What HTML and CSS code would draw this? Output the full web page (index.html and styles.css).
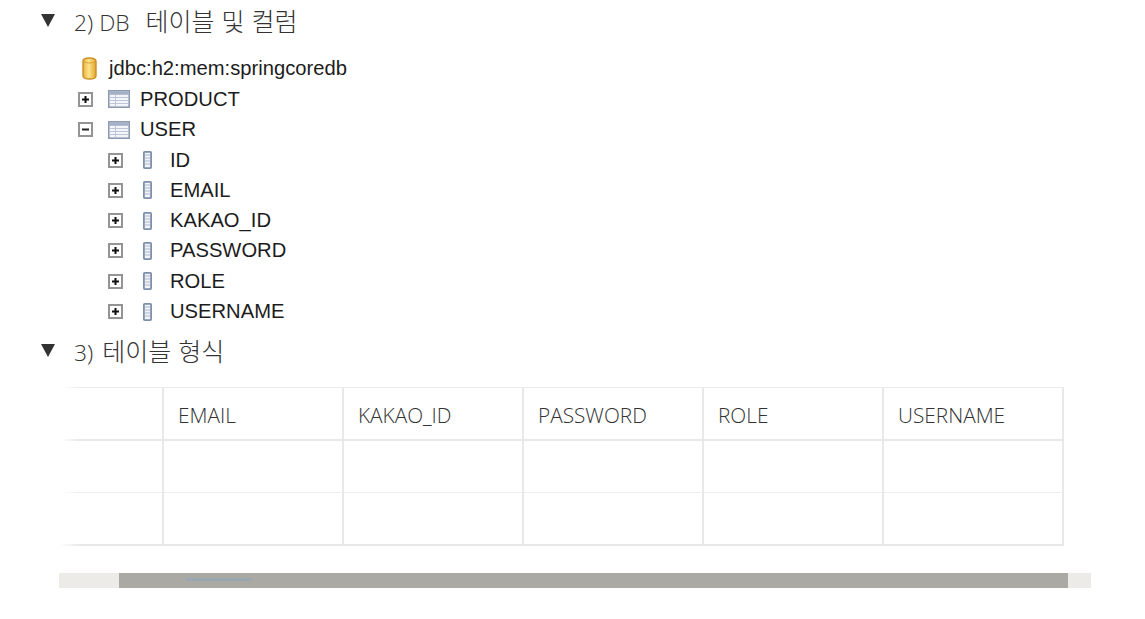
FILE: index.html
```html
<!DOCTYPE html>
<html lang="ko">
<head>
    <meta charset="UTF-8">
    <meta name="viewport" content="width=device-width, initial-scale=1.0">
    <title>DB 테이블 및 컬럼</title>
    <link rel="stylesheet" href="styles.css">
</head>
<body>
    <svg class="sprites" width="0" height="0" aria-hidden="true">
        <defs>
            <linearGradient id="gold" x1="0" x2="1" y1="0" y2="0">
                <stop offset="0" stop-color="#e9b13c"/>
                <stop offset="0.45" stop-color="#fde48c"/>
                <stop offset="1" stop-color="#e2a52f"/>
            </linearGradient>
            <symbol id="ico-db" viewBox="0 0 15 23">
                <path d="M1 4c0-4 13-4 13 0v15c0 4-13 4-13 0z" fill="url(#gold)" stroke="#c98f24" stroke-width="1.4"/>
                <path d="M2 4.5c2 2 9 2 11 0" fill="none" stroke="#d9a236" stroke-width="1"/>
            </symbol>
            <symbol id="ico-plus" viewBox="0 0 15 15">
                <rect x="1" y="1" width="13" height="13" fill="#fff" stroke="#949494" stroke-width="2"/>
                <path d="M4 7.5h7M7.5 4v7" stroke="#111" stroke-width="2"/>
            </symbol>
            <symbol id="ico-minus" viewBox="0 0 15 15">
                <rect x="1" y="1" width="13" height="13" fill="#fff" stroke="#949494" stroke-width="2"/>
                <path d="M4 7.5h7" stroke="#222" stroke-width="2"/>
            </symbol>
            <symbol id="ico-table" viewBox="0 0 22 18">
                <rect x="0.8" y="0.8" width="20.4" height="16.4" fill="#f3f5f8" stroke="#8c9ab2" stroke-width="1.6"/>
                <rect x="1.4" y="1.4" width="19.2" height="3.4" fill="#a3b0c6"/>
                <path d="M1 7.5h20M1 10.5h20M1 13.5h20" stroke="#bcc6d6" stroke-width="1"/>
                <path d="M7.5 5v12" stroke="#bcc6d6" stroke-width="1"/>
            </symbol>
            <symbol id="ico-col" viewBox="0 0 9 18">
                <rect x="0.9" y="0.9" width="7.2" height="16.2" rx="0.8" fill="#f1f3f7" stroke="#7d8fab" stroke-width="1.8"/>
                <path d="M2 4h5M2 7h5M2 10h5M2 13h5" stroke="#aeb9cb" stroke-width="1"/>
            </symbol>
        </defs>
    </svg>

    <h3 class="toggle toggle-first"><span>2) DB <span class="ko word-gap">테이블 및 컬럼</span></span></h3>

    <ul class="tree">
        <li class="root"><svg class="ico-db"><use href="#ico-db"/></svg>jdbc:h2:mem:springcoredb</li>
        <li><svg class="ico-box"><use href="#ico-plus"/></svg><svg class="ico-table"><use href="#ico-table"/></svg>PRODUCT</li>
        <li><svg class="ico-box"><use href="#ico-minus"/></svg><svg class="ico-table"><use href="#ico-table"/></svg>USER</li>
        <li class="col"><svg class="ico-box"><use href="#ico-plus"/></svg><svg class="ico-col"><use href="#ico-col"/></svg>ID</li>
        <li class="col"><svg class="ico-box"><use href="#ico-plus"/></svg><svg class="ico-col"><use href="#ico-col"/></svg>EMAIL</li>
        <li class="col"><svg class="ico-box"><use href="#ico-plus"/></svg><svg class="ico-col"><use href="#ico-col"/></svg>KAKAO_ID</li>
        <li class="col"><svg class="ico-box"><use href="#ico-plus"/></svg><svg class="ico-col"><use href="#ico-col"/></svg>PASSWORD</li>
        <li class="col"><svg class="ico-box"><use href="#ico-plus"/></svg><svg class="ico-col"><use href="#ico-col"/></svg>ROLE</li>
        <li class="col"><svg class="ico-box"><use href="#ico-plus"/></svg><svg class="ico-col"><use href="#ico-col"/></svg>USERNAME</li>
    </ul>

    <h3 class="toggle toggle-second"><span>3) <span class="ko">테이블 형식</span></span></h3>

    <div class="table-wrap">
        <table>
            <thead>
                <tr><th></th><th>EMAIL</th><th>KAKAO_ID</th><th>PASSWORD</th><th>ROLE</th><th>USERNAME</th></tr>
            </thead>
            <tbody>
                <tr><td></td><td></td><td></td><td></td><td></td><td></td></tr>
                <tr><td></td><td></td><td></td><td></td><td></td><td></td></tr>
            </tbody>
        </table>
    </div>

    <div class="scrollbar">
        <div class="thumb"><span class="grip"></span></div>
    </div>
</body>
</html>
```

FILE: styles.css
```css
body {
    font-family: "Open Sans", "Noto Sans CJK KR", sans-serif;
    margin: 0;
    padding: 0;
    background-color: #fff;
    color: #333;
    overflow: hidden;
}

.sprites {
    display: block;
    height: 0;
}

.toggle {
    display: flex;
    align-items: center;
    gap: 19px;
    height: 30px;
    margin: 0;
    padding-left: 41px;
    font-size: 22.8px;
    font-weight: 300;
    line-height: 30px;
    white-space: pre;
}

.toggle::before {
    content: "";
    width: 0;
    height: 0;
    border-left: 7.5px solid transparent;
    border-right: 7.5px solid transparent;
    border-top: 13px solid #333;
    margin-top: -2px;
}

.toggle-first {
    margin-top: 6px;
}

.toggle-second {
    margin-top: 10px;
}

.ko {
    margin-left: 3px;
    font-family: "Noto Sans CJK KR", sans-serif;
    font-size: 25px;
}

.ko.word-gap {
    margin-left: 10px;
}

.tree {
    list-style-type: none;
    margin: 17px 0 0;
    padding: 0 0 0 78px;
    font-family: "Liberation Sans", Arial, sans-serif;
    font-size: 20.2px;
    color: #1c1c1c;
}

.tree li {
    display: flex;
    align-items: center;
    height: 30.3px;
}

.tree svg {
    flex: none;
}

.ico-db {
    width: 15px;
    height: 23px;
    margin: 0 12px 0 4px;
}

.ico-box {
    width: 15px;
    height: 15px;
}

.ico-table {
    width: 22px;
    height: 18px;
    margin: 0 10px 0 15px;
}

.ico-col {
    width: 9px;
    height: 18px;
    margin: 0 18px 0 20px;
}

.tree .col {
    padding-left: 30px;
}

.tree .root {
    margin-bottom: 1px;
}

.table-wrap {
    position: relative;
    margin: 20px 0 0 60px;
    width: 1004px;
}

/* first column is scrolled out, its lines fade at the left edge */
.table-wrap::before {
    content: "";
    position: absolute;
    left: 0;
    top: 0;
    bottom: 0;
    width: 20px;
    background: linear-gradient(to right, #fff, rgba(255, 255, 255, 0));
}

table {
    border-collapse: separate;
    border-spacing: 0;
    table-layout: fixed;
    width: 1004px;
    border-top: 1px solid #eaeaea;
}

th, td {
    width: 180px;
    box-sizing: border-box;
    padding: 0 0 0 14px;
    border-right: 2px solid #e8e8e8;
    text-align: left;
}

th:first-child, td:first-child {
    width: 104px;
}

th {
    height: 53px;
    padding-top: 3px;
    font-size: 20.8px;
    font-weight: 300;
    color: #333;
    border-bottom: 2px solid #e8e8e8;
}

td {
    height: 52px;
    border-bottom: 1px solid #eeeeee;
}

tbody tr:last-child td {
    height: 53px;
    border-bottom: 2px solid #e8e8e8;
}

.scrollbar {
    display: flex;
    height: 15px;
    width: 1032px;
    margin: 27px 0 0 59px;
    padding: 0 23px 0 60px;
    box-sizing: border-box;
    background-color: #ecebe8;
}

.thumb {
    flex: 1;
    padding: 5px 0 0 67px;
    background-color: #aaa9a3;
}

.grip {
    display: block;
    width: 66px;
    height: 3px;
    background-color: #9aa7b0;
}
```
